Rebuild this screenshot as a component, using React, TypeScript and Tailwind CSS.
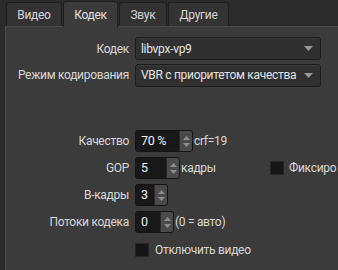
import React from 'react'

const font = { fontFamily: 'Roboto, "Noto Sans", sans-serif' }

function Tab({ label, active, width }: { label: string; active?: boolean; width: string }) {
  if (active) {
    return (
      <div
        className={`${width} relative z-10 -mb-px flex h-[26px] items-start justify-center rounded-t-[3px] border border-b-0 border-[#1f1f1f] bg-[#3b3b3b] pt-[5px] text-[#e2e2e2]`}
      >
        {label}
      </div>
    )
  }
  return (
    <div
      className={`${width} mt-[2px] flex h-[24px] items-center justify-center rounded-t-[3px] border border-b-0 border-[#1f1f1f] bg-[#333333] text-[#d6d6d6]`}
    >
      {label}
    </div>
  )
}

function Combo({ value }: { value: string }) {
  return (
    <div className="flex h-[23px] w-[186px] items-center justify-between rounded-[3px] border border-[#1c1c1c] bg-[#303030] pl-[5px] pr-[7px] text-[#e4e4e4] shadow-[inset_0_1px_0_#3a3a3a]">
      <span className="whitespace-nowrap">{value}</span>
      <svg width="9" height="5" viewBox="0 0 9 5" className="shrink-0">
        <path d="M0 0 L9 0 L4.5 5 Z" fill="#9a9a9a" />
      </svg>
    </div>
  )
}

function Spin({ value, width }: { value: string; width: string }) {
  return (
    <div className={`${width} flex h-[22px] shrink-0 overflow-hidden rounded-[3px] border border-[#141414] bg-[#181818]`}>
      <div className="flex flex-1 items-center pl-[5px] text-[12.5px] text-[#f0f0f0]">{value}</div>
      <div className="flex w-[13px] flex-col items-center justify-center gap-[3px] border-l border-[#2a2a2a] bg-[#4a4a4a]">
        <svg width="7" height="4" viewBox="0 0 7 4">
          <path d="M0 4 L7 4 L3.5 0 Z" fill="#8c8c8c" />
        </svg>
        <svg width="7" height="4" viewBox="0 0 7 4">
          <path d="M0 0 L7 0 L3.5 4 Z" fill="#8c8c8c" />
        </svg>
      </div>
    </div>
  )
}

function Check() {
  return <div className="h-[14px] w-[14px] shrink-0 border border-[#262626] bg-[#151515]" />
}

function Row({ label, children, h = 'h-[22px]' }: { label?: string; children: React.ReactNode; h?: string }) {
  return (
    <div className={`${h} flex items-center`}>
      <div className="w-[129px] shrink-0 whitespace-nowrap pr-[6px] text-right text-[#d8d8d8]">{label}</div>
      <div className="flex flex-1 items-center whitespace-nowrap">{children}</div>
    </div>
  )
}

export default function App() {
  return (
    <div
      className="h-[270px] w-[338px] overflow-hidden bg-[#2b2b2b] text-[12px] leading-[16px] tracking-[-0.3px]"
      style={font}
    >
      <div className="flex h-[26px] items-end gap-[1px] pl-[6px]">
        <Tab label="Видео" width="w-[56px]" />
        <Tab label="Кодек" width="w-[55px]" active />
        <Tab label="Звук" width="w-[48px]" />
        <Tab label="Другие" width="w-[61px]" />
      </div>
      <div className="ml-[5px] h-[244px] border-l border-t border-[#4a4a4a] bg-[#3b3b3b] pt-[10px]">
        <div className="flex flex-col gap-[3px]">
          <Row label="Кодек" h="h-[23px]">
            <Combo value="libvpx-vp9" />
          </Row>
          <Row label="Режим кодирования" h="h-[24px]">
            <Combo value="VBR с приоритетом качества" />
          </Row>
        </div>
        <div className="mt-[43px] flex flex-col gap-[5px]">
          <Row label="Качество">
            <Spin value="70 %" width="w-[58px]" />
            <span className="ml-[1px] text-[#d8d8d8]">crf=19</span>
          </Row>
          <Row label="GOP">
            <div className="flex w-[135px] shrink-0 items-center">
              <Spin value="5" width="w-[45px]" />
              <span className="ml-[1px] text-[#d8d8d8]">кадры</span>
            </div>
            <div className="flex items-center gap-[5px] text-[#d8d8d8]">
              <Check />
              <span>Фиксиро</span>
            </div>
          </Row>
          <Row label="B-кадры">
            <Spin value="3" width="w-[33px]" />
          </Row>
          <Row label="Потоки кодека">
            <Spin value="0" width="w-[39px]" />
            <span className="ml-[1px] text-[#d8d8d8]">(0 = авто)</span>
          </Row>
          <Row label="" h="h-[20px]">
            <div className="mt-[4px] flex items-center gap-[6px] text-[#d8d8d8]">
              <Check />
              <span>Отключить видео</span>
            </div>
          </Row>
        </div>
      </div>
    </div>
  )
}
